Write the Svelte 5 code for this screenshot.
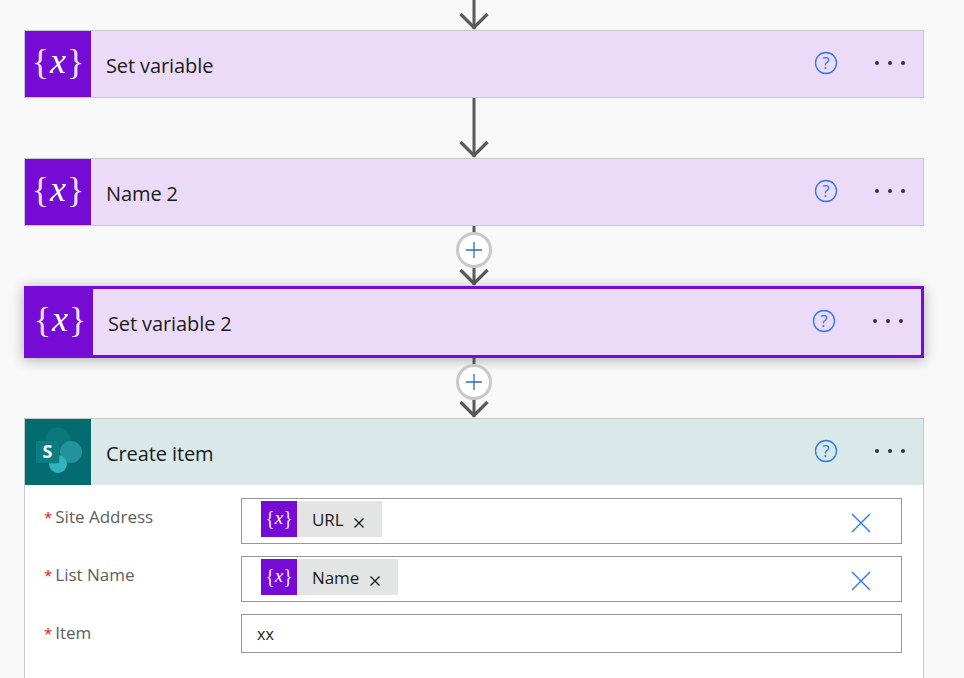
<script>
    const fields = [
        { label: "Site Address", token: "URL", clear: true },
        { label: "List Name", token: "Name", clear: true },
        { label: "Item", value: "xx" },
    ];
</script>

{#snippet arrow(height)}
    <svg class="arrow" width="40" {height} viewBox="0 0 40 {height}">
        <line x1="20" y1="0" x2="20" y2={height - 1} stroke="#595959" stroke-width="3" />
        <polyline points="6.5,{height - 16} 20,{height - 2.5} 33.5,{height - 16}" fill="none" stroke="#595959" stroke-width="3.2" />
    </svg>
{/snippet}

{#snippet addArrow()}
    <div class="connector">
        {@render arrow(60)}
        <button class="add" aria-label="Insert a new step">
            <svg width="16" height="16" viewBox="0 0 16 16">
                <path d="M0 8h16M8 0v16" stroke="#2a6fb8" stroke-width="1.3" fill="none" />
            </svg>
        </button>
    </div>
{/snippet}

{#snippet varIcon()}
    <span class="var-icon"><span class="brace">{"{"}</span><i>x</i><span class="brace">{"}"}</span></span>
{/snippet}

{#snippet actions()}
    <svg class="help" width="24" height="24" viewBox="0 0 24 24">
        <circle cx="12" cy="12" r="10.5" fill="none" stroke="#2b78f0" stroke-width="1.3" />
        <text x="12" y="18" text-anchor="middle" class="q">?</text>
    </svg>
    <div class="dots"><span></span><span></span><span></span></div>
{/snippet}

<div class="canvas">
    <div class="connector top">{@render arrow(30)}</div>

    <div class="card">
        <div class="head">
            <div class="icon">{@render varIcon()}</div>
            <div class="title">Set variable</div>
            {@render actions()}
        </div>
    </div>

    <div class="connector">{@render arrow(60)}</div>

    <div class="card">
        <div class="head">
            <div class="icon">{@render varIcon()}</div>
            <div class="title">Name 2</div>
            {@render actions()}
        </div>
    </div>

    {@render addArrow()}

    <div class="card selected">
        <div class="head">
            <div class="icon">{@render varIcon()}</div>
            <div class="title">Set variable 2</div>
            {@render actions()}
        </div>
    </div>

    {@render addArrow()}

    <div class="card sharepoint">
        <div class="head">
            <div class="icon">
                <svg width="66" height="66" viewBox="0 0 66 66">
                    <circle cx="33" cy="21" r="12.5" fill="#0b777b" />
                    <circle cx="46" cy="33" r="11" fill="#22939a" />
                    <circle cx="33" cy="45" r="9" fill="#2fb4bd" />
                    <rect x="10.5" y="21.5" width="24" height="23" rx="1.5" fill="#036267" opacity="0.45" />
                    <rect x="11" y="22" width="23" height="22" rx="1.5" fill="#0c7e83" />
                    <text x="22.5" y="39" text-anchor="middle" class="s">S</text>
                </svg>
            </div>
            <div class="title">Create item</div>
            {@render actions()}
        </div>
        <div class="form">
            {#each fields as field}
                <div class="row">
                    <div class="label"><span class="req">*</span>{field.label}</div>
                    <div class="input" class:plain={!field.token}>
                        {#if field.token}
                            <div class="token">
                                <div class="token-icon">{@render varIcon()}</div>
                                <span class="token-text">{field.token}</span>
                                <svg class="token-x" width="10" height="10" viewBox="0 0 10 10">
                                    <path d="M0.5 0.5l9 9M9.5 0.5l-9 9" stroke="#1a1a1a" stroke-width="1.4" fill="none" />
                                </svg>
                            </div>
                            <svg class="clear" width="20" height="20" viewBox="0 0 20 20">
                                <path d="M1 1l18 18M19 1L1 19" stroke="#2b78f0" stroke-width="1.4" fill="none" />
                            </svg>
                        {:else}
                            {field.value}
                        {/if}
                    </div>
                </div>
            {/each}
        </div>
    </div>
</div>

<style>
    :global(body) {
        background: #f8f8f8;
        overflow: hidden;
    }
    .canvas {
        width: 964px;
        height: 678px;
        overflow: hidden;
        padding-left: 24px;
        box-sizing: border-box;
        font-family: "Open Sans", "Noto Sans", sans-serif;
        color: #1b1b1b;
    }
    .connector {
        position: relative;
        width: 900px;
        height: 60px;
        display: flex;
        justify-content: center;
    }
    .connector.top {
        height: 30px;
    }
    .arrow {
        display: block;
    }
    .add {
        position: absolute;
        left: 432px;
        top: 6px;
        width: 36px;
        height: 36px;
        padding: 0;
        border: 3px solid #c8c8c8;
        border-radius: 50%;
        background: #fff;
        display: flex;
        align-items: center;
        justify-content: center;
    }
    .card {
        width: 900px;
        box-sizing: border-box;
        border: 1px solid #c8c8c8;
        background: #fff;
    }
    .head {
        display: flex;
        align-items: center;
        height: 66px;
        background: #ecdbf8;
    }
    .selected {
        position: relative;
        border: 3px solid #770bd6;
        box-shadow: 0 2px 12px rgba(0, 0, 0, 0.3);
    }
    .icon {
        width: 66px;
        height: 66px;
        flex: none;
        background: #770bd6;
        display: flex;
        align-items: center;
        justify-content: center;
        color: #fff;
    }
    .var-icon {
        display: flex;
        align-items: center;
        gap: 1px;
        font-family: "Liberation Serif", serif;
        line-height: 1;
        margin-top: -4px;
    }
    .var-icon .brace {
        font-size: 36px;
        color: rgba(255, 255, 255, 0.9);
    }
    .var-icon i {
        font-size: 36px;
        margin-top: -3px;
    }
    .title {
        flex: 1;
        margin-left: 15px;
        padding-top: 2px;
        font-size: 20px;
        letter-spacing: -0.1px;
    }
    .help {
        flex: none;
        margin-right: 37px;
        margin-top: -2px;
    }
    .q {
        font-size: 17px;
        fill: #2b78f0;
        font-family: "Open Sans", sans-serif;
    }
    .dots {
        display: flex;
        gap: 9px;
        margin-right: 18px;
        margin-top: -2px;
    }
    .dots span {
        width: 4px;
        height: 4px;
        border-radius: 50%;
        background: #333;
    }
    .sharepoint .head {
        background: #d9e8e8;
    }
    .sharepoint .icon {
        background: #036c70;
    }
    .s {
        font-size: 18px;
        font-weight: 700;
        fill: #fff;
        font-family: "Open Sans", sans-serif;
    }
    .form {
        padding: 13px 21px 40px 19px;
        display: flex;
        flex-direction: column;
        gap: 12px;
    }
    .row {
        display: flex;
    }
    .label {
        width: 197px;
        flex: none;
        padding-top: 7px;
        font-size: 17px;
        color: #605e5c;
    }
    .req {
        color: #e81123;
        margin-right: 3px;
        font-size: 15px;
    }
    .input {
        flex: 1;
        height: 46px;
        box-sizing: border-box;
        border: 1px solid #979797;
        background: #fff;
        padding: 2px 19px;
        display: flex;
        align-items: flex-start;
        justify-content: space-between;
    }
    .input.plain {
        height: 39px;
        padding: 8px 15px 0;
        font-size: 16px;
    }
    .token {
        display: flex;
        align-items: center;
        height: 36px;
        background: #e3e5e5;
    }
    .token-icon {
        width: 36px;
        height: 36px;
        background: #770bd6;
        color: #fff;
        display: flex;
        align-items: center;
        justify-content: center;
    }
    .token-icon .var-icon {
        gap: 0;
        margin-top: -2px;
    }
    .token-icon .var-icon .brace {
        font-size: 20px;
    }
    .token-icon .var-icon i {
        font-size: 19px;
        margin-top: -1px;
    }
    .token-text {
        margin-left: 15px;
        font-size: 17px;
        letter-spacing: -0.1px;
    }
    .token-x {
        margin: 8px 18px 0 11px;
    }
    .clear {
        margin-top: 12px;
        margin-right: 11px;
    }
</style>
